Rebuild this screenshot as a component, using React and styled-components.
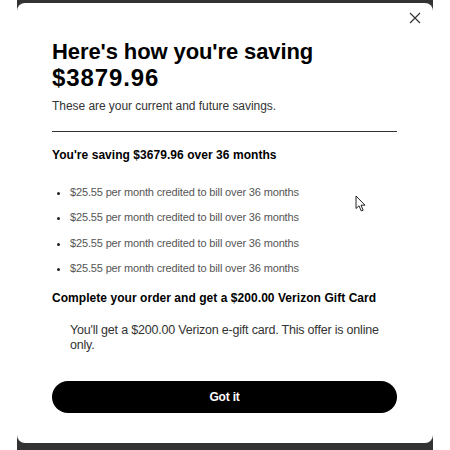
// App.jsx - Verizon savings breakdown modal
import styled, { createGlobalStyle } from "styled-components";

const GlobalStyle = createGlobalStyle`
  html, body {
    margin: 0;
    padding: 0;
    background: #ffffff;
  }
  body {
    font-family: "Liberation Sans", Arial, sans-serif;
    color: #000000;
    -webkit-font-smoothing: antialiased;
  }
`;

const credits = [
  "$25.55 per month credited to bill over 36 months",
  "$25.55 per month credited to bill over 36 months",
  "$25.55 per month credited to bill over 36 months",
  "$25.55 per month credited to bill over 36 months",
];

export default function App() {
  return (
    <>
      <GlobalStyle />
      <Backdrop>
        <Modal>
          {/* Close button in the top right */}
          <CloseRow>
            <CloseButton aria-label="Close">
              <svg width="12" height="12" viewBox="0 0 12 12">
                <path d="M1 1 L11 11 M11 1 L1 11" stroke="#333" strokeWidth="1.2" fill="none" />
              </svg>
            </CloseButton>
          </CloseRow>

          <Body>
            <Title>
              Here's how you're saving
              <Amount>$3879.96</Amount>
            </Title>
            <Subtitle>These are your current and future savings.</Subtitle>

            <Divider />

            <SectionTitle $top={15}>You're saving $3679.96 over 36 months</SectionTitle>
            <CreditList>
              {credits.map((credit, index) => (
                <CreditItem key={index}>{credit}</CreditItem>
              ))}
            </CreditList>

            <SectionTitle $top={14}>Complete your order and get a $200.00 Verizon Gift Card</SectionTitle>
            <Offer>You'll get a $200.00 Verizon e-gift card. This offer is online only.</Offer>

            <GotItButton>Got it</GotItButton>
          </Body>

          {/* Mouse pointer captured in the screenshot */}
          <Pointer width="12" height="18" viewBox="0 0 12 18">
            <path
              d="M1 1 L1 13.5 L4 10.8 L6.3 16 L8.2 15.2 L6 10.2 L10 10.2 Z"
              fill="#fff"
              stroke="#222"
              strokeWidth="1"
              strokeLinejoin="round"
            />
          </Pointer>
        </Modal>
      </Backdrop>
    </>
  );
}

const Backdrop = styled.div`
  margin: 0 17px;
  height: 450px;
  padding-top: 3px;
  box-sizing: border-box;
  background: #333333;
`;

const Modal = styled.div`
  position: relative;
  height: 440px;
  background: #ffffff;
  border-radius: 8px;
`;

const CloseRow = styled.div`
  display: flex;
  justify-content: flex-end;
  padding: 9px 12px 0 0;
`;

const CloseButton = styled.button`
  width: 12px;
  height: 12px;
  padding: 0;
  border: none;
  background: none;
  display: flex;
  cursor: pointer;
`;

const Body = styled.div`
  padding: 0 36px 0 35px;
  display: flex;
  flex-direction: column;
`;

const Title = styled.h1`
  margin: 15px 0 0;
  font-size: 22px;
  line-height: 26px;
  font-weight: 700;
  letter-spacing: -0.1px;
`;

const Amount = styled.span`
  display: block;
  font-size: 24px;
  line-height: 26px;
  letter-spacing: 0.9px;
`;

const Subtitle = styled.p`
  margin: 7px 0 0;
  font-size: 12px;
  line-height: 16px;
  color: #333333;
  letter-spacing: -0.05px;
`;

const Divider = styled.hr`
  margin: 17px 0 0;
  border: none;
  border-top: 1px solid #333333;
`;

const SectionTitle = styled.h2`
  margin: ${({ $top }) => $top}px 0 0;
  font-size: 12px;
  line-height: 16px;
  font-weight: 700;
  letter-spacing: 0.05px;
`;

const CreditList = styled.ul`
  margin: 21px 0 0;
  padding: 0 0 0 18px;
  display: flex;
  flex-direction: column;
  gap: 9.4px;
`;

const CreditItem = styled.li`
  font-size: 11px;
  line-height: 16px;
  color: #555555;
  letter-spacing: -0.15px;
  &::marker {
    color: #222222;
  }
`;

const Offer = styled.p`
  margin: 17px 0 0;
  padding-left: 18px;
  font-size: 12.5px;
  line-height: 15px;
  color: #333333;
  letter-spacing: -0.2px;
`;

const GotItButton = styled.button`
  margin-top: 28px;
  height: 32px;
  border: none;
  border-radius: 16px;
  background: #000000;
  color: #ffffff;
  font-family: "Liberation Sans", Arial, sans-serif;
  font-size: 12px;
  font-weight: 700;
  letter-spacing: -0.2px;
  cursor: pointer;
`;

const Pointer = styled.svg`
  position: absolute;
  left: 338px;
  top: 192px;
`;
